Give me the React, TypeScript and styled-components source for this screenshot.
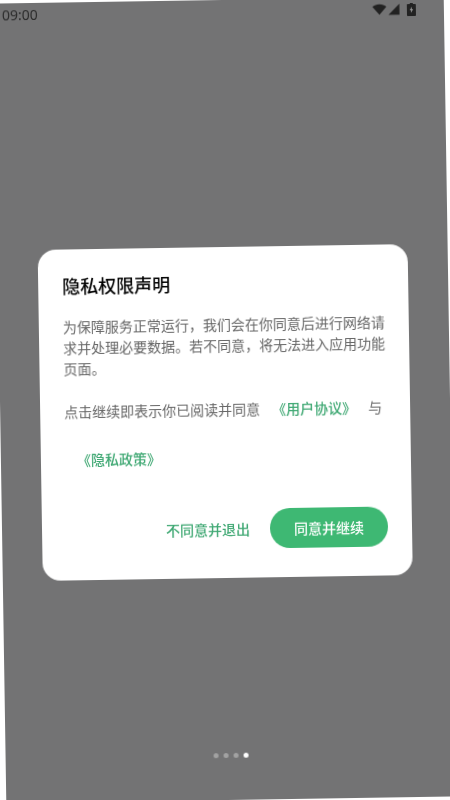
import styled, { createGlobalStyle } from "styled-components";

const GlobalStyle = createGlobalStyle`
  html, body {
    margin: 0;
    padding: 0;
    width: 450px;
    height: 800px;
    overflow: hidden;
    background: #fff;
    font-family: "Noto Sans CJK SC", "Noto Sans", sans-serif;
  }
`;

// the whole capture sits slightly tilted
const Screen = styled.div`
  width: 450px;
  height: 800px;
  position: relative;
  display: flex;
  flex-direction: column;
  background: #737374;
  transform: rotate(-0.9deg);
  filter: blur(0.45px);
`;

const StatusBar = styled.div`
  height: 24px;
  flex-shrink: 0;
  display: flex;
  align-items: center;
  justify-content: space-between;
  padding: 0 28px 0 8px;
  color: #2b2b2b;
`;

const Time = styled.span`
  font-family: "Noto Sans", sans-serif;
  font-size: 14px;
  line-height: 24px;
`;

const StatusIcons = styled.div`
  display: flex;
  align-items: center;
  gap: 1px;
`;

const Main = styled.div`
  flex: 1;
  display: flex;
  align-items: center;
  justify-content: center;
`;

const Dialog = styled.div`
  width: 370px;
  box-sizing: border-box;
  padding: 24px 24px 25px;
  background: #fff;
  border-radius: 18px;
`;

const Title = styled.h2`
  margin: 0 0 19px;
  font-size: 18px;
  line-height: 24px;
  font-weight: 500;
  color: #000;
`;

const Body = styled.p`
  margin: 0 0 8px;
  font-size: 14px;
  line-height: 21px;
  color: #666;
`;

const LinkRow = styled.div`
  display: flex;
  flex-wrap: wrap;
  align-items: center;
`;

const RowText = styled.span`
  height: 48px;
  display: flex;
  align-items: center;
  font-size: 14px;
  color: #666;
`;

const PolicyLink = styled.a`
  height: 48px;
  display: flex;
  align-items: center;
  padding: 0 12px;
  font-size: 14px;
  font-weight: 500;
  color: #3fa873;
`;

const Actions = styled.div`
  margin-top: 24px;
  height: 48px;
  display: flex;
  align-items: center;
  justify-content: flex-end;
  gap: 8px;
`;

const DeclineButton = styled.button`
  height: 40px;
  padding: 0 12px;
  border: none;
  background: none;
  font: 500 14px "Noto Sans CJK SC", sans-serif;
  color: #3fa873;
`;

const AcceptButton = styled.button`
  height: 40px;
  padding: 0 24px;
  border: none;
  border-radius: 20px;
  background: #3eb873;
  font: 500 14px "Noto Sans CJK SC", sans-serif;
  color: #fff;
`;

const Dots = styled.div`
  position: absolute;
  left: 0;
  right: 0;
  bottom: 42px;
  display: flex;
  justify-content: center;
  gap: 5px;
`;

const Dot = styled.span<{ $active?: boolean }>`
  width: 5px;
  height: 5px;
  border-radius: 50%;
  background: ${(p) => (p.$active ? "#fff" : "#a2a2a2")};
`;

function WifiIcon() {
  return (
    <svg width="15" height="12" viewBox="0 0 16 12">
      <path d="M0.5 3.2C2.5 1.3 5.1 0.3 8 0.3s5.5 1 7.5 2.9L8 11.6z" fill="#222" />
    </svg>
  );
}

function SignalIcon() {
  return (
    <svg width="12" height="12" viewBox="0 0 13 13">
      <path d="M12.5 0.5V12.5H0.5z" fill="#222" />
    </svg>
  );
}

function BatteryIcon() {
  return (
    <svg width="9" height="13" viewBox="0 0 9 13" style={{ marginLeft: 6 }}>
      <path d="M3 0h3v1h2.2c.4 0 .8.4.8.8V12.2c0 .4-.4.8-.8.8H.8c-.4 0-.8-.4-.8-.8V1.800C0 1.400.4 1 .8 1H3z" fill="#222" />
      <path d="M5 3.500 2.800 7.200h1.400L3.900 10 6.200 6.200H4.800z" fill="#999" />
    </svg>
  );
}

export default function App() {
  return (
    <>
      <GlobalStyle />
      <Screen>
        <StatusBar>
          <Time>09:00</Time>
          <StatusIcons>
            <WifiIcon />
            <SignalIcon />
            <BatteryIcon />
          </StatusIcons>
        </StatusBar>
        <Main>
          <Dialog>
            <Title>隐私权限声明</Title>
            <Body>
              为保障服务正常运行，我们会在你同意后进行网络请求并处理必要数据。若不同意，将无法进入应用功能页面。
            </Body>
            <LinkRow>
              <RowText>点击继续即表示你已阅读并同意</RowText>
              <PolicyLink>《用户协议》</PolicyLink>
              <RowText>与</RowText>
              <PolicyLink>《隐私政策》</PolicyLink>
            </LinkRow>
            <Actions>
              <DeclineButton>不同意并退出</DeclineButton>
              <AcceptButton>同意并继续</AcceptButton>
            </Actions>
          </Dialog>
        </Main>
        <Dots>
          <Dot />
          <Dot />
          <Dot />
          <Dot $active />
        </Dots>
      </Screen>
    </>
  );
}
